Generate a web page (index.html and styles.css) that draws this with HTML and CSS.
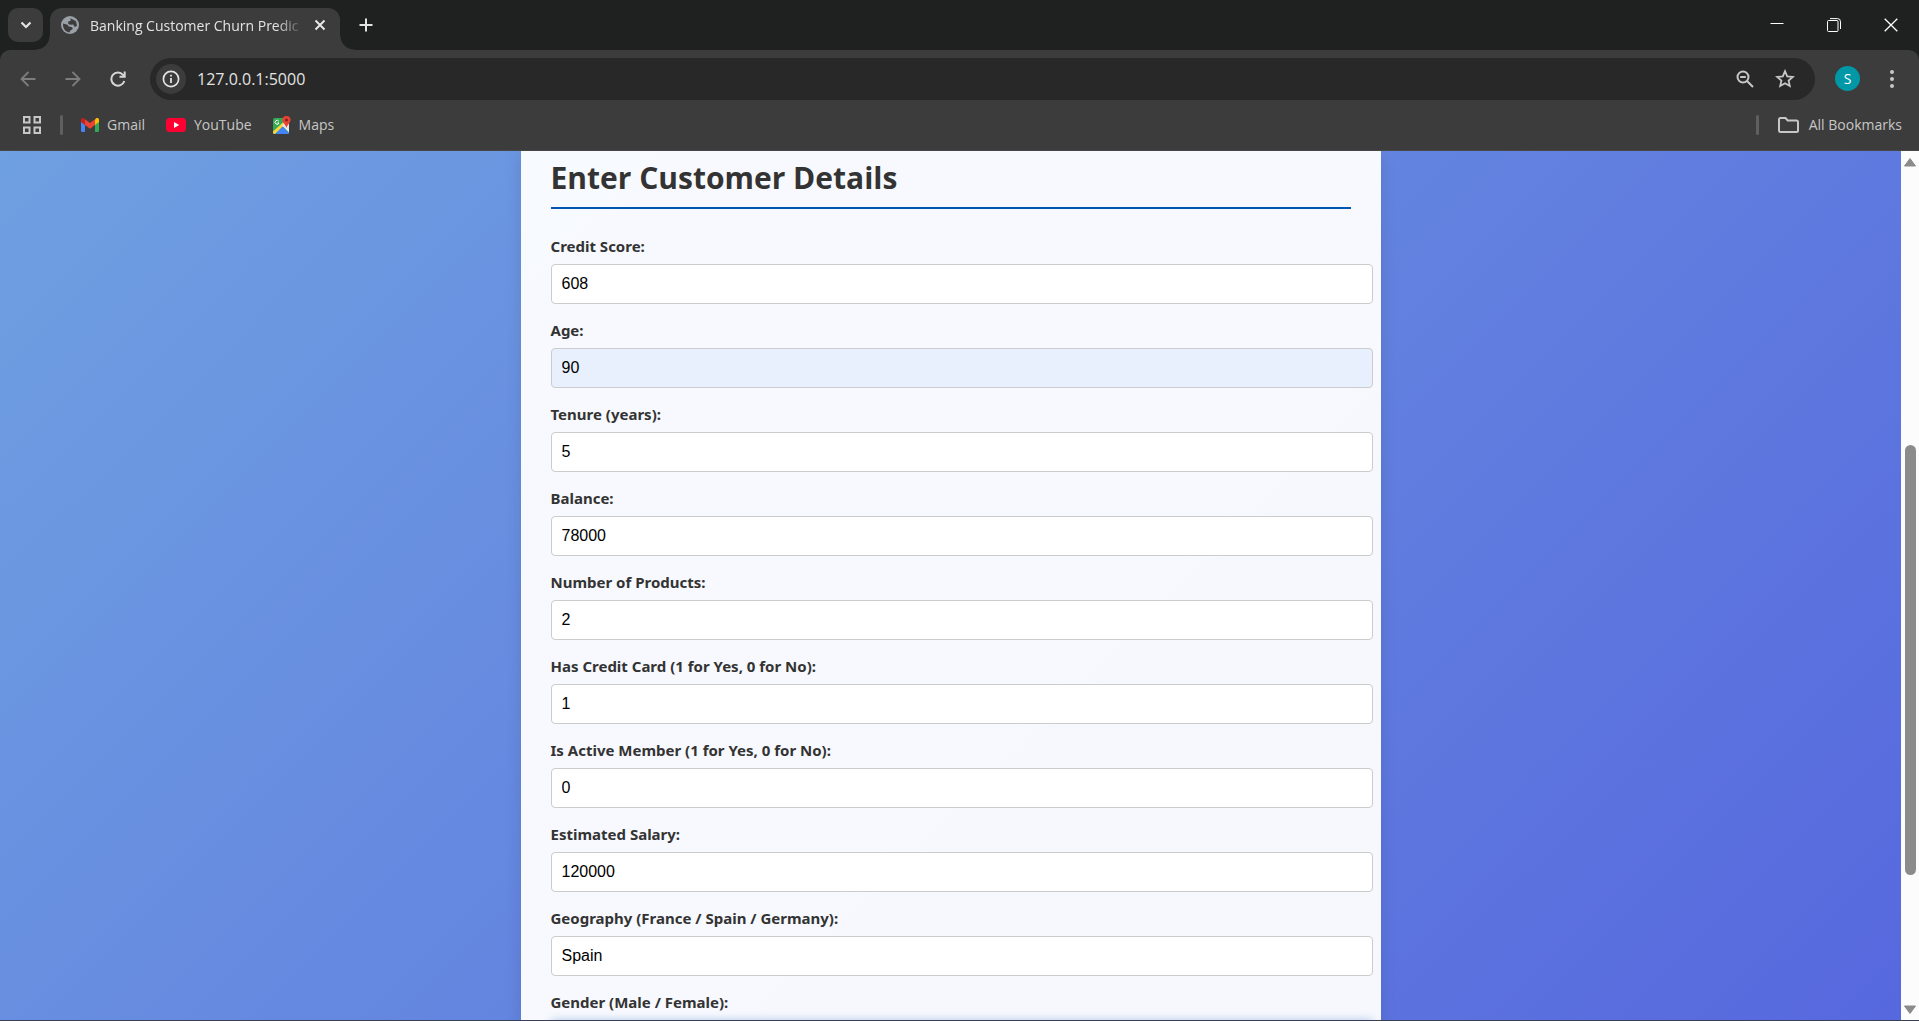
FILE: index.html
```html
<!DOCTYPE html>
<html lang="en">
<head>
<meta charset="utf-8">
<title>Banking Customer Churn Prediction</title>
<link rel="stylesheet" href="styles.css">
</head>
<body>
<header class="browser">
  <div class="tabstrip">
    <button class="tab-search" aria-label="Search tabs"><svg width="12" height="8" viewBox="0 0 12 8"><path d="M1.5 1.5 6 6l4.500-4.500" fill="none" stroke="#e3e3e3" stroke-width="2.200"/></svg></button>
    <div class="tab">
      <svg class="favicon" width="18" height="18" viewBox="0 0 18 18"><circle cx="9" cy="9" r="9" fill="#9aa0a8"/><path d="M9.500 2.200 15 5.200l1 4.500-2.200 1.200-1.600-2.400-3.400.2L7 7.200l.4-1.800 2.300-.7zM2 7.500l4.500 1.200 1.300 1.800 3.400.8.5 1.800-2.300 1.300-1 2C4.500 16 1.700 12.500 2 7.500z" fill="#3c3c3c"/></svg>
      <span class="tab-title">Banking Customer Churn Predic</span>
      <button class="tab-close" aria-label="Close tab"><svg width="12" height="12" viewBox="0 0 12 12"><path d="m1.500 1.500 9 9m0-9-9 9" stroke="#e8e8e8" stroke-width="2"/></svg></button>
    </div>
    <button class="new-tab" aria-label="New tab"><svg width="14" height="14" viewBox="0 0 14 14"><path d="M7 .5v13M.5 7h13" stroke="#e3e3e3" stroke-width="2"/></svg></button>
    <div class="window-controls">
      <button aria-label="Minimize"><svg width="14" height="14" viewBox="0 0 14 14"><path d="M.5 5.500h13" stroke="#fff"/></svg></button>
      <button aria-label="Restore"><svg width="14" height="14" viewBox="0 0 14 14" fill="none" stroke="#fff"><rect x=".5" y="2.500" width="10.500" height="11" rx="1"/><path d="M3 .6h7.500a3 3 0 0 1 3 3V11"/></svg></button>
      <button aria-label="Close"><svg width="14" height="14" viewBox="0 0 14 14"><path d="m.7.7 12.600 12.600m0-12.600L.7 13.300" stroke="#fff" stroke-width="1.300"/></svg></button>
    </div>
  </div>
  <div class="toolbar">
    <div class="nav-buttons">
      <button aria-label="Back"><svg width="16" height="16" viewBox="0 0 16 16"><path d="M15.500 8H2m6.500-7-7 7 7 7" fill="none" stroke="#7d7d7d" stroke-width="1.800"/></svg></button>
      <button aria-label="Forward"><svg width="16" height="16" viewBox="0 0 16 16"><path d="M.5 8H14M7.500 1l7 7-7 7" fill="none" stroke="#7d7d7d" stroke-width="1.800"/></svg></button>
      <button aria-label="Reload"><svg width="16" height="16" viewBox="0 0 16 16"><path d="M14.300 10A6.600 6.600 0 1 1 13 3.800L14.500 5.500M14.700.5v5.300H9.500" fill="none" stroke="#d6d6d6" stroke-width="2"/></svg></button>
    </div>
    <div class="address">
      <button class="site-info" aria-label="Site information"><svg width="18" height="18" viewBox="0 0 18 18"><circle cx="9" cy="9" r="7.600" fill="none" stroke="#e3e3e3" stroke-width="1.700"/><path d="M9 8v5M9 4.800v1.800" stroke="#e3e3e3" stroke-width="1.800"/></svg></button>
      <input class="url" aria-label="Address" value="127.0.0.1:5000">
      <button class="address-action" aria-label="Zoom"><svg width="18" height="18" viewBox="0 0 18 18"><g fill="none" stroke="#c7c7c7" stroke-width="2"><circle cx="7" cy="7" r="5.500"/><path d="m11 11 6 6M4.200 7h5.600"/></g></svg></button>
      <button class="address-action" aria-label="Bookmark"><svg width="20" height="19" viewBox="0 0 20 19"><path d="m10 2.200 2.200 5.200 5.600.5-4.200 3.700 1.200 5.400L10 14.200 5.200 17l1.200-5.400-4.200-3.700 5.600-.5z" fill="none" stroke="#c7c7c7" stroke-width="1.800"/></svg></button>
    </div>
    <button class="avatar" aria-label="Profile">S</button>
    <button class="menu" aria-label="Menu"><svg width="4" height="18" viewBox="0 0 4 18" fill="#c7c7c7"><circle cx="2" cy="2" r="2"/><circle cx="2" cy="9" r="2"/><circle cx="2" cy="16" r="2"/></svg></button>
  </div>
  <nav class="bookmarks">
    <button class="apps" aria-label="Apps"><svg width="18" height="18" viewBox="0 0 18 18" fill="none" stroke="#c7c7c7" stroke-width="2"><path d="M1 1h5.500v5.500H1zM11.500 1H17v5.500h-5.500zM1 11.500h5.500V17H1zM11.500 11.500H17V17h-5.500z"/></svg></button>
    <span class="divider"></span>
    <a class="bookmark" href="#gmail"><svg width="18" height="14" viewBox="0 0 18 14"><path d="M0 3v9.500Q0 14 1.300 14H4V5z" fill="#4285f4"/><path d="M14 5v9h2.700q1.300 0 1.300-1.500V3z" fill="#34a853"/><path d="M14 1.500V7l4-3V2c0-2-2-2.500-3.200-1.500z" fill="#fbbc04"/><path d="M4 1.500V7L0 4V2C0 0 2-.5 3.200.5z" fill="#c5221f"/><path d="M4 1.300 9 5l5-3.700V7l-5 3.800L4 7z" fill="#ea4335"/></svg>Gmail</a>
    <a class="bookmark" href="#youtube"><svg width="20" height="14" viewBox="0 0 20 14"><rect width="20" height="14" rx="3.500" fill="#ff0033"/><path d="m8 4 5.200 3L8 10z" fill="#fff"/></svg>YouTube</a>
    <a class="bookmark" href="#maps"><svg width="18" height="18" viewBox="0 0 18 18"><rect y="2" width="16" height="16" rx="1.500" fill="#34a853"/><path d="m0 15.500 11-10 3 2L2 18Q0 18 0 16.500z" fill="#fdd835"/><path d="m9 9.500 7 7V6h-4z" fill="#e8eaed"/><path d="m2 18 7.500-7.500L16 17q0 1-1 1z" fill="#4285f4"/><path d="M5.800 5.200A2 2 0 1 0 6 7H4.200" fill="none" stroke="#fff"/><path d="M13.500 0a4 4 0 0 1 4 4c0 3-3.200 4.500-4 8-.8-3.500-4-5-4-8a4 4 0 0 1 4-4z" fill="#ea4335"/><circle cx="13.500" cy="4" r="1.500" fill="#8c1d18"/></svg>Maps</a>
    <span class="divider divider-end"></span>
    <a class="bookmark all" href="#bookmarks"><svg width="21" height="16" viewBox="0 0 21 16"><path d="M2.500 1h5l2.200 2.500h8.800q1.500 0 1.500 1.500v8.500q0 1.500-1.500 1.500h-16Q1 15 1 13.500v-11Q1 1 2.500 1z" fill="none" stroke="#c7c7c7" stroke-width="2"/></svg>All Bookmarks</a>
  </nav>
</header>
<div class="viewport">
  <main class="page">
    <section class="card">
      <h2>Enter Customer Details</h2>
      <form class="form">
        <div class="field"><label for="credit">Credit Score:</label><input id="credit" type="text" value="608"></div>
        <div class="field"><label for="age">Age:</label><input id="age" class="autofilled" type="text" value="90"></div>
        <div class="field"><label for="tenure">Tenure (years):</label><input id="tenure" type="text" value="5"></div>
        <div class="field"><label for="balance">Balance:</label><input id="balance" type="text" value="78000"></div>
        <div class="field"><label for="products">Number of Products:</label><input id="products" type="text" value="2"></div>
        <div class="field"><label for="card">Has Credit Card (1 for Yes, 0 for No):</label><input id="card" type="text" value="1"></div>
        <div class="field"><label for="active">Is Active Member (1 for Yes, 0 for No):</label><input id="active" type="text" value="0"></div>
        <div class="field"><label for="salary">Estimated Salary:</label><input id="salary" type="text" value="120000"></div>
        <div class="field"><label for="geo">Geography (France / Spain / Germany):</label><input id="geo" type="text" value="Spain"></div>
        <div class="field"><label for="gender">Gender (Male / Female):</label><input id="gender" class="focused" type="text"></div>
      </form>
    </section>
  </main>
  <div class="scrollbar">
    <svg width="14" height="10" viewBox="0 0 14 10"><path d="M7 1.500 12.500 9h-11z" fill="#8b8b8b" stroke="#8b8b8b" stroke-linejoin="round"/></svg>
    <div class="track"><div class="thumb"></div></div>
    <svg width="14" height="10" viewBox="0 0 14 10"><path d="M7 8.500 1.500 1h11z" fill="#8b8b8b" stroke="#8b8b8b" stroke-linejoin="round"/></svg>
  </div>
</div>
</body>
</html>
```
FILE: styles.css
```css
* { box-sizing: border-box; }

body {
  margin: 0;
  height: 100vh;
  display: flex;
  flex-direction: column;
  overflow: hidden;
  border-bottom: 1px solid #3a3f55;
  font-family: "Segoe UI", "Open Sans", "Noto Sans", sans-serif;
  color: #333;
}

button {
  display: flex;
  align-items: center;
  justify-content: center;
  margin: 0;
  padding: 0;
  border: 0;
  background: none;
  font: inherit;
}

svg { display: block; flex: none; }

/* Browser frame */
.browser {
  flex: none;
  background: #1f2120;
  font-size: 14px;
}

.tabstrip {
  display: flex;
  align-items: flex-start;
  height: 50px;
  padding: 8px 0 0 8px;
}

.tab-search {
  width: 35px;
  height: 34px;
  margin-right: 7px;
  border-radius: 10px;
  background: #3c3c3c;
}

.tab {
  position: relative;
  display: flex;
  align-items: center;
  width: 290px;
  height: 42px;
  padding: 0 12px 8px 11px;
  border-radius: 12px 12px 0 0;
  background: #3c3c3c;
  color: #e3e3e3;
}

.tab::before,
.tab::after {
  content: "";
  position: absolute;
  bottom: 0;
  width: 14px;
  height: 14px;
}

.tab::before {
  right: 100%;
  background: radial-gradient(circle at 0 0, transparent 13px, #3c3c3c 14px);
}

.tab::after {
  left: 100%;
  background: radial-gradient(circle at 100% 0, transparent 13px, #3c3c3c 14px);
}

.tab-title {
  flex: 1;
  margin: 0 8px 0 11px;
  white-space: nowrap;
  mask-image: linear-gradient(to right, #000 87%, transparent);
}

.tab-close { width: 16px; height: 20px; }

.new-tab {
  width: 28px;
  height: 34px;
  margin-left: 12px;
}

.window-controls {
  display: flex;
  margin-left: auto;
}

.window-controls button { width: 57px; height: 34px; }

.toolbar {
  display: flex;
  align-items: center;
  height: 57px;
  padding: 0 15px 0 16px;
  border-radius: 10px 10px 0 0;
  background: #3c3c3c;
}

.nav-buttons {
  display: flex;
  gap: 22px;
  margin-right: 21px;
}

.nav-buttons button { width: 23px; height: 24px; }

.address {
  flex: 1;
  display: flex;
  align-items: center;
  height: 42px;
  padding: 0 20px 0 6px;
  border-radius: 21px;
  background: #282828;
}

.site-info {
  width: 30px;
  height: 30px;
  border-radius: 50%;
  background: #3c3c3c;
}

.url {
  flex: 1;
  min-width: 0;
  padding: 0;
  margin-left: 11px;
  border: 0;
  background: none;
  color: #e3e3e3;
  font: inherit;
  font-size: 16px;
}

.address-action { width: 20px; height: 24px; margin-left: 20px; }

.avatar {
  width: 25px;
  height: 25px;
  margin: 0 20px;
  border-radius: 50%;
  background: #0097a7;
  color: #fff;
}

.menu { width: 24px; height: 24px; }

.bookmarks {
  display: flex;
  align-items: center;
  height: 44px;
  padding: 0 17px 8px 23px;
  border-bottom: 1px solid #474747;
  background: #3c3c3c;
}

.divider {
  width: 3px;
  height: 20px;
  margin: 0 18px 0 19px;
  border-radius: 2px;
  background: #5f5f5f;
}

.divider-end { margin: 0 19px 0 auto; }

.bookmark {
  display: flex;
  align-items: center;
  gap: 8px;
  margin-right: 21px;
  color: #c7c7c7;
  line-height: 20px;
  text-decoration: none;
}

.all { margin-right: 0; gap: 10px; }

/* Page */
.viewport {
  flex: 1;
  display: flex;
  min-height: 0;
}

.page {
  flex: 1;
  overflow: hidden;
  background: linear-gradient(135deg, #6fa0e1, #5768de);
}

.card {
  max-width: 860px;
  margin: 0 auto;
  padding: 5px 30px 30px;
  background: rgba(255, 255, 255, 0.95);
  box-shadow: 0 4px 15px rgba(0, 0, 0, 0.1);
}

h2 {
  margin: 0 0 26px;
  padding-bottom: 7px;
  border-bottom: 2px solid #0056b3;
  font-size: 30px;
  font-weight: 700;
  line-height: 44px;
}

.field { margin-bottom: 15px; }

.field label {
  display: block;
  margin-bottom: 7px;
  font-family: "Segoe UI", "Noto Sans", sans-serif;
  font-size: 15px;
  font-weight: 700;
  line-height: 22px;
}

.field input {
  display: block;
  box-sizing: content-box;
  width: 100%;
  height: 18px;
  padding: 10px;
  border: 1px solid #ccc;
  border-radius: 4px;
  background: #fff;
  color: #000;
  font-family: Arial, "Liberation Sans", sans-serif;
  font-size: 16px;
}

.field .autofilled { background: #e8f0fe; }

.field .focused {
  border-color: #0056b3;
  outline: none;
  box-shadow: 0 0 8px rgba(0, 86, 179, 0.3);
}

/* Scrollbar */
.scrollbar {
  display: flex;
  flex-direction: column;
  align-items: center;
  width: 18px;
  padding: 6px 2px 5px 2px;
  background: #fcfcfc;
}

.track {
  flex: 1;
  width: 11px;
}

.thumb {
  height: 430px;
  margin-top: 278px;
  border-radius: 6px;
  background: #8b8b8b;
}
```
